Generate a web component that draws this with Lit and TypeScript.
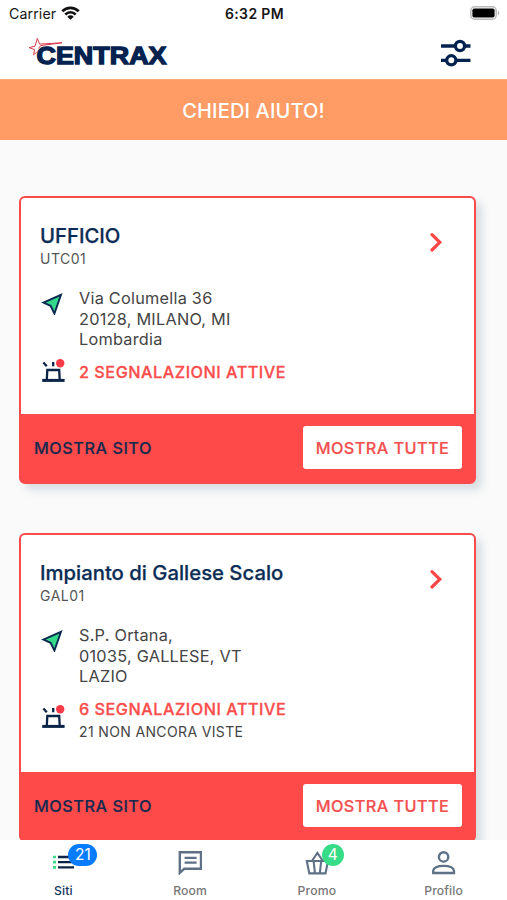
import { LitElement, html, css, svg, nothing } from "lit";
import { customElement, property } from "lit/decorators.js";

interface Site {
  name: string;
  code: string;
  address: string[];
  alerts: string;
  unseen?: string;
}

const SITES: Site[] = [
  {
    name: "UFFICIO",
    code: "UTC01",
    address: ["Via Columella 36", "20128, MILANO, MI", "Lombardia"],
    alerts: "2 SEGNALAZIONI ATTIVE",
  },
  {
    name: "Impianto di Gallese Scalo",
    code: "GAL01",
    address: ["S.P. Ortana,", "01035, GALLESE, VT", "LAZIO"],
    alerts: "6 SEGNALAZIONI ATTIVE",
    unseen: "21 NON ANCORA VISTE",
  },
];

@customElement("status-bar")
class StatusBar extends LitElement {
  static styles = css`
    :host { display: grid; grid-template-columns: 1fr auto 1fr; align-items: center; height: 26px; padding: 0 7px 2px 9px; box-sizing: content-box; color: #161616; }
    .left { display: flex; align-items: center; gap: 5px; font-size: 14.2px; letter-spacing: 0.1px; }
    .time { font-size: 14px; font-weight: 600; letter-spacing: 0.35px; }
    .battery { justify-self: end; display: block; }
    .wifi { display: block; margin-top: -1px; }
  `;
  render() {
    return html`
      <div class="left">
        <span>Carrier</span>
        <svg class="wifi" width="19" height="14" viewBox="0 0 19 14">
          <path d="M1.3 5.2a11.6 11.6 0 0 1 16.4 0" fill="none" stroke="#111" stroke-width="2.8"/>
          <path d="M4.3 8.5a7.3 7.3 0 0 1 10.4 0" fill="none" stroke="#111" stroke-width="2.5"/>
          <path d="M9.5 13.8 6.3 10.7a4.5 4.5 0 0 1 6.4 0Z" fill="#111"/>
        </svg>
      </div>
      <span class="time">6:32 PM</span>
      <svg class="battery" width="30" height="14" viewBox="0 0 30 14">
        <rect x=".8" y=".8" width="25.4" height="12.4" rx="3.8" fill="#fff" stroke="#b9b9b9" stroke-width="1.5"/>
        <rect x="2.4" y="2.4" width="22.2" height="9.2" rx="1.8" fill="#000"/>
        <path d="M27.8 4.8c2 .6 2 3.8 0 4.4Z" fill="#b3b3b3"/>
      </svg>`;
  }
}

@customElement("top-header")
class TopHeader extends LitElement {
  static styles = css`
    :host { display: flex; align-items: center; justify-content: space-between; height: 51px; padding: 0 36px 0 28px; }
    .logo { display: block; }
    .word { font: 700 23.5px "Liberation Sans", "Inter", sans-serif; fill: #04224f; stroke: #04224f; stroke-width: 1.3; }
    .filter { display: block; margin-top: -2px; }
  `;
  render() {
    return html`
      <svg class="logo" width="142" height="34" viewBox="0 0 142 34">
        <path d="M1 10.6 7 9.2 9.3 1.4 11.6 7.1 34 5.8 12.7 8.6 10.5 11.4M1 10.6 6.5 12.6 5.6 17.8 8.7 15.2" fill="none" stroke="#d9384a" stroke-width="1"/>
        <text class="word" x="8.5" y="27" textLength="130" lengthAdjust="spacingAndGlyphs">CENTRAX</text>
      </svg>
      <svg class="filter" width="30" height="28" viewBox="0 0 30 28" fill="none" stroke="#04224f" stroke-width="3.3">
        <path d="M0 7H14M24 7H29.5M0 21.3H5.5M15.5 21.3H29.5"/>
        <circle cx="19" cy="7" r="4.6"/><circle cx="10.3" cy="21.3" r="4.6"/>
      </svg>`;
  }
}

@customElement("site-card")
class SiteCard extends LitElement {
  @property({ attribute: false }) site!: Site;
  static styles = css`
    :host { display: block; width: 457px; box-sizing: border-box; border: 2px solid #fb4a4a; border-radius: 6px; background: #fff; box-shadow: 6px 6px 9px rgba(70, 100, 120, 0.19); }
    .body { position: relative; padding: 26px 19px 0; height: 216px; box-sizing: border-box; }
    :host([tall]) .body { height: 237px; }
    .name { font-size: 20.3px; font-weight: 500; line-height: 24px; color: #0b2d55; -webkit-text-stroke: 0.25px #0b2d55; }
    .code { margin-top: 1px; font-size: 14px; line-height: 20px; letter-spacing: 0.5px; color: #555; }
    .chevron { position: absolute; right: 31px; top: 34px; }
    .row { display: grid; grid-template-columns: 39px 1fr; }
    .where { margin-top: 19px; font-size: 16.3px; line-height: 20.7px; letter-spacing: 0.24px; color: #444; }
    .pin { display: block; margin: 5px 0 0 1px; }
    .what { margin-top: 10px; }
    .alarm { display: block; margin: -1px 0 0 2px; }
    :host([tall]) .alarm { margin-top: 8px; }
    .alerts { font-size: 16.2px; font-weight: 500; line-height: 25px; letter-spacing: 0.53px; color: #fb4e4d; -webkit-text-stroke: 0.3px #fb4e4d; }
    .unseen { font-size: 14px; line-height: 20px; letter-spacing: 0.36px; color: #444; }
    .foot { display: flex; align-items: center; justify-content: space-between; height: 68px; padding: 0 12px 2px 13px; box-sizing: border-box; background: #ff4a4a; font-size: 16.3px; font-weight: 500; letter-spacing: 0.5px; color: #16294f; }
    .foot span { padding-top: 2px; -webkit-text-stroke: 0.2px; }
    .all { display: flex; align-items: center; justify-content: center; font: inherit; letter-spacing: 0.42px; width: 159px; height: 43px; padding: 0; border: 0; border-radius: 3px; background: #fff; color: #f4504f; white-space: nowrap; }
  `;
  render() {
    const s = this.site;
    return html`
      <div class="body">
        <div class="name">${s.name}</div>
        <div class="code">${s.code}</div>
        <svg class="chevron" width="14" height="20" viewBox="0 0 14 20"><path d="M3 2.6 10.8 10.3 3 18" fill="none" stroke="#fb4646" stroke-width="3.2" stroke-linecap="round"/></svg>
        <div class="row where">
          <svg class="pin" width="22" height="22" viewBox="0 0 22 22">
            <path d="M2.4 9.6 20 1.8 13.4 20.6 9.6 12.8Z" fill="#35d98c" stroke="#0a2a50" stroke-width="1.9"/>
          </svg>
          <div>${s.address.map((line) => html`<div>${line}</div>`)}</div>
        </div>
        <div class="row what">
          <svg class="alarm" width="23" height="24" viewBox="0 0 23 24">
            <path d="M4.8 21 5.3 11H17.2L17.7 21" fill="none" stroke="#0a2346" stroke-width="2.3"/>
            <path d="M.2 21.4H22.6" fill="none" stroke="#0a2346" stroke-width="3"/>
            <path d="M1.4 3.4 4.8 7.2M11.2 3V7.2" stroke="#0a2346" stroke-width="2.3"/>
            <circle cx="18.2" cy="4.3" r="4.2" fill="#fb3b48"/>
          </svg>
          <div>
            <div class="alerts">${s.alerts}</div>
            ${s.unseen ? html`<div class="unseen">${s.unseen}</div>` : nothing}
          </div>
        </div>
      </div>
      <div class="foot"><span>MOSTRA SITO</span><button class="all"><span>MOSTRA TUTTE</span></button></div>`;
  }
}

const TABS = [
  {
    label: "Siti", badge: "21", tone: "blue",
    icon: svg`<path d="M6 7H22M6 12.2H22M6 17.4H22" stroke="#0b2346" stroke-width="2.3"/><path d="M1 7H4M1 12.2H4M1 17.4H4" stroke="#3ddb87" stroke-width="2.7"/>`,
  },
  {
    label: "Room", badge: "", tone: "",
    icon: svg`<path d="M1.8 2.2H23V18.8H6.2L1.8 22.8Z" stroke-width="2.4"/><path d="M6.6 7.9H18.6M6.6 12.7H18.6" stroke-width="2.2"/>`,
  },
  {
    label: "Promo", badge: "4", tone: "green",
    icon: svg`<path d="M1.8 11H23L20.5 23.4H4.3ZM6.9 11 12.4 2.8 17.9 11M8.6 11 10 23.4M16.2 11 14.8 23.4" stroke-width="2.1"/>`,
  },
  {
    label: "Profilo", badge: "", tone: "",
    icon: svg`<circle cx="11.6" cy="6.9" r="4.7" stroke-width="2.4"/><path d="M1.2 23V20.5C2.5 14.2 20.7 14.2 22 20.5V23Z" stroke-width="2.3"/>`,
  },
];

@customElement("tab-bar")
class TabBar extends LitElement {
  static styles = css`
    :host { display: grid; grid-template-columns: repeat(4, 1fr); height: 60px; background: #fff; position: relative; z-index: 1; }
    .tab { display: flex; flex-direction: column; align-items: center; padding-top: 10px; font-size: 12.2px; font-weight: 500; color: #777; }
    .tab.active { color: #17365a; }
    .icon { position: relative; width: 24px; height: 25px; }
    .tab.active .icon { margin-left: 2px; }
    .glyph { display: block; fill: none; stroke: #5e7186; }
    .label { margin-top: 8px; line-height: 16px; letter-spacing: 0.15px; }
    .badge { position: absolute; top: -6px; left: 17px; height: 22px; min-width: 22px; box-sizing: border-box; border-radius: 11px; color: #fff; font-size: 15.5px; font-weight: 400; line-height: 22px; text-align: center; }
    .blue { background: #087cff; width: 29px; left: 16px; }
    .green { background: #36dc87; }
  `;
  render() {
    return TABS.map((t, i) => html`
      <div class="tab ${i === 0 ? "active" : ""}">
        <div class="icon">
          <svg class="glyph" width="24" height="25" viewBox="0 0 24 25">${t.icon}</svg>
          ${t.badge ? html`<span class="badge ${t.tone}">${t.badge}</span>` : nothing}
        </div>
        <span class="label">${t.label}</span>
      </div>`);
  }
}

@customElement("app-root")
class AppRoot extends LitElement {
  static styles = css`
    :host { display: flex; flex-direction: column; height: 900px; overflow: hidden; background: #fff; font-family: "Inter", "Liberation Sans", sans-serif; }
    .help { display: flex; align-items: center; justify-content: center; height: 61px; flex: none; box-sizing: border-box; border-top: 1px solid #f9ab80; background: #ff9b65; color: #fff; font-size: 20px; font-weight: 500; letter-spacing: 0.15px; padding-top: 2px; }
    .list { flex: 1; min-height: 0; overflow: hidden; display: flex; flex-direction: column; gap: 49px; padding: 56px 0 0 19px; background: #fafafa; }
    .list > * { flex: none; }
  `;
  render() {
    return html`
      <status-bar></status-bar>
      <top-header></top-header>
      <div class="help">CHIEDI AIUTO!</div>
      <div class="list">${SITES.map((s) => html`<site-card .site=${s} ?tall=${!!s.unseen}></site-card>`)}</div>
      <tab-bar></tab-bar>`;
  }
}
